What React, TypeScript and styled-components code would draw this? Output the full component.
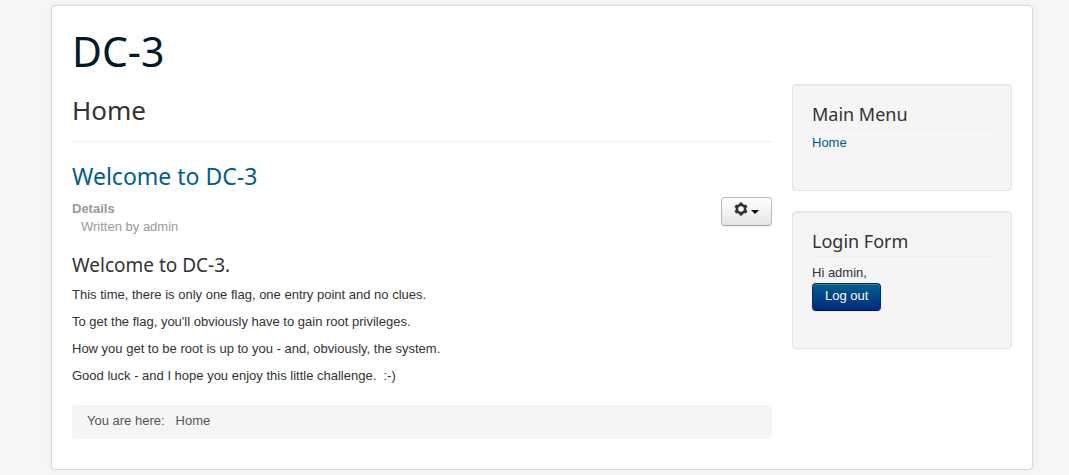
import React from "react";
import styled, { createGlobalStyle } from "styled-components";

const heading = `"Noto Sans", "Open Sans", sans-serif`;

const GlobalStyle = createGlobalStyle`
  *, *::before, *::after { box-sizing: border-box; }
  body {
    margin: 0;
    background: #f4f6f7;
    color: #333;
    font: 13px/18px "Liberation Sans", Helvetica, Arial, sans-serif;
  }
`;

const Page = styled.div`
  padding: 5px 36px 5px 51px;
`;

const Container = styled.div`
  padding: 20px;
  background: #fff;
  border: 1px solid #d9d9d9;
  border-radius: 4px;
  box-shadow: 0 0 6px rgba(0, 0, 0, 0.05);
`;

const Header = styled.header`
  margin-bottom: 8px;
`;

const SiteTitle = styled.a`
  display: inline-block;
  color: #001a27;
  font: 400 41px/50px ${heading};
  text-decoration: none;
`;

const Columns = styled.div`
  display: grid;
  grid-template-columns: minmax(0, 1fr) 220px;
  gap: 20px;
  align-items: start;
`;

const PageHeading = styled.h1`
  margin: 0 0 18px;
  padding: 8px 0 12px;
  border-bottom: 1px solid #eee;
  font: 400 26px/37px ${heading};
`;

const ArticleTitle = styled.h2`
  margin: 0 0 5px;
  font: 400 23px/32px ${heading};
`;

const Link = styled.a`
  color: #005e8d;
  text-decoration: none;
`;

const ArticleInfo = styled.div`
  display: flex;
  justify-content: space-between;
  align-items: flex-start;
  margin-bottom: 17px;
`;

const Details = styled.dl`
  margin: 3px 0 0;
  color: #999;

  dt { font-weight: 700; }
  dd { margin: 0 0 0 9px; }
`;

const Button = styled.button`
  display: inline-flex;
  align-items: center;
  justify-content: center;
  height: 29px;
  padding: 0 12px;
  color: #333;
  background: linear-gradient(#fff, #e6e6e6);
  border: 1px solid #bbb;
  border-bottom-color: #a2a2a2;
  border-radius: 4px;
  box-shadow: inset 0 1px 0 rgba(255, 255, 255, 0.2), 0 1px 2px rgba(0, 0, 0, 0.05);
  font: inherit;
  cursor: pointer;
`;

const PrimaryButton = styled(Button)`
  height: 28px;
  padding-bottom: 2px;
  color: #fff;
  background: linear-gradient(#005e8d, #002a80);
  border-color: #002a80 #002a80 #00133b;
  text-shadow: 0 -1px 0 rgba(0, 0, 0, 0.25);
`;

const MenuButton = styled(Button)`
  width: 51px;
  gap: 3px;
  padding: 0 1px 5px 0;
`;

const Caret = styled.span`
  margin-top: 5px;
  border: 4px solid transparent;
  border-top-color: #000;
  border-bottom: 0;
`;

const Subheading = styled.h3`
  margin: 0 0 9px;
  font: 400 19px/24px ${heading};
`;

const WellTitle = styled.h3`
  margin: 0 0 4px;
  padding-bottom: 3px;
  border-bottom: 1px solid #eee;
  font: 400 18px/24px ${heading};
`;

const Paragraph = styled.p`
  margin: 0 0 9px;
`;

const Breadcrumb = styled.nav`
  display: flex;
  gap: 11px;
  margin: 20px 0 10px;
  padding: 7px 15px 9px;
  color: #555;
  background: #f5f5f5;
  border-radius: 4px;
`;

const Aside = styled.aside`
  display: grid;
  gap: 20px;
`;

const Well = styled.section`
  padding: 17px 19px 37px;
  background: #f5f5f5;
  border: 1px solid #e3e3e3;
  border-radius: 4px;
  box-shadow: inset 0 1px 1px rgba(0, 0, 0, 0.05);
`;

const Menu = styled.ul`
  margin: 0;
  padding: 0 0 1px;
  list-style: none;
`;

const LoginForm = styled.form`
  display: flex;
  flex-direction: column;
  align-items: flex-start;
  gap: 1px;
  padding-top: 3px;
`;

function Gear() {
  return (
    <svg width="14" height="14" viewBox="0 0 14 14" aria-hidden="true">
      <g fill="#333">
        <circle cx="7" cy="7" r="5.4" />
        {[0, 60, 120].map((a) => (
          <rect key={a} x="5.4" y="0.4" width="3.2" height="13.2" rx="0.6" transform={`rotate(${a} 7 7)`} />
        ))}
      </g>
      <circle cx="7" cy="7" r="2.8" fill="#f8f8f8" />
    </svg>
  );
}

export default function App() {
  return (
    <>
      <GlobalStyle />
      <Page>
        <Container>
          <Header>
            <SiteTitle href="#">DC-3</SiteTitle>
          </Header>
          <Columns>
            <main>
              <PageHeading>Home</PageHeading>
              <article>
                <ArticleTitle>
                  <Link href="#welcome">Welcome to DC-3</Link>
                </ArticleTitle>
                <ArticleInfo>
                  <Details>
                    <dt>Details</dt>
                    <dd>Written by admin</dd>
                  </Details>
                  <MenuButton type="button" aria-label="Article tools">
                    <Gear />
                    <Caret />
                  </MenuButton>
                </ArticleInfo>
                <Subheading>Welcome to DC-3.</Subheading>
                <Paragraph>This time, there is only one flag, one entry point and no clues.</Paragraph>
                <Paragraph>To get the flag, you'll obviously have to gain root privileges.</Paragraph>
                <Paragraph>How you get to be root is up to you - and, obviously, the system.</Paragraph>
                <Paragraph>Good luck - and I hope you enjoy this little challenge.&nbsp; :-)</Paragraph>
              </article>
              <Breadcrumb aria-label="Breadcrumb">
                <span>You are here:</span>
                <span>Home</span>
              </Breadcrumb>
            </main>
            <Aside>
              <Well>
                <WellTitle>Main Menu</WellTitle>
                <Menu>
                  <li>
                    <Link href="#">Home</Link>
                  </li>
                </Menu>
              </Well>
              <Well>
                <WellTitle>Login Form</WellTitle>
                <LoginForm onSubmit={(e) => e.preventDefault()}>
                  <span>Hi admin,</span>
                  <PrimaryButton type="submit">Log out</PrimaryButton>
                </LoginForm>
              </Well>
            </Aside>
          </Columns>
        </Container>
      </Page>
    </>
  );
}
